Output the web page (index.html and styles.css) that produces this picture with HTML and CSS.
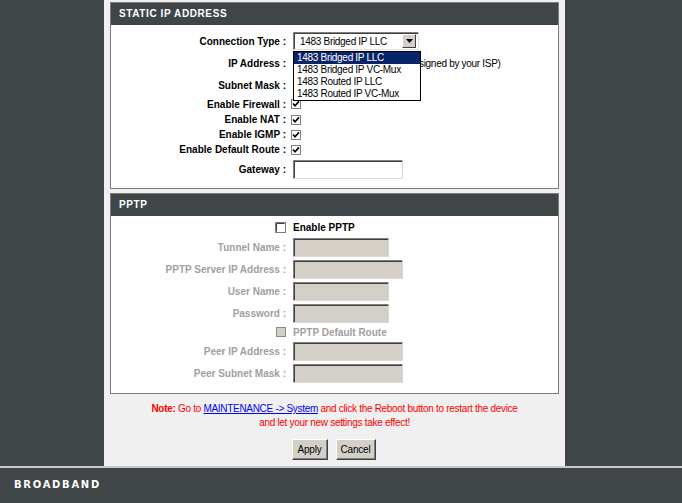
FILE: index.html
```html
<!DOCTYPE html>
<html>
<head>
<meta charset="utf-8">
<title>Static IP Address</title>
<link rel="stylesheet" href="styles.css">
</head>
<body>
<div class="page">
  <div class="gutter-l"></div>
  <div class="center">
    <div class="box box-static">
      <div class="box-h">STATIC IP ADDRESS</div>
      <div class="box-b">
        <div class="row r-sel">
          <span class="lbl">Connection Type :</span>
          <div class="val">
            <div class="selwrap">
              <div class="select"><span class="sel-text">1483 Bridged IP LLC</span><span class="sel-btn"><svg width="7" height="4" viewBox="0 0 7 4"><path d="M0 0H7L3.5 4Z" fill="#000"/></svg></span></div>
              <ul class="dropdown">
                <li class="on">1483 Bridged IP LLC</li>
                <li>1483 Bridged IP VC-Mux</li>
                <li>1483 Routed IP LLC</li>
                <li>1483 Routed IP VC-Mux</li>
              </ul>
            </div>
          </div>
        </div>
        <div class="row">
          <span class="lbl">IP Address :</span>
          <div class="val"><span class="inp w110"></span><span class="hint">(assigned by your ISP)</span></div>
        </div>
        <div class="row">
          <span class="lbl">Subnet Mask :</span>
          <div class="val"><span class="inp w110"></span></div>
        </div>
        <div class="row r-cb r-first">
          <span class="lbl">Enable Firewall :</span>
          <div class="val"><svg class="cb" width="10" height="10" viewBox="0 0 10 10"><rect x="0.5" y="0.5" width="9" height="9" fill="#fff" stroke="#808080"/><path d="M2 4.5L4 6.8L8 2.4" stroke="#000" stroke-width="1.6" fill="none"/></svg></div>
        </div>
        <div class="row r-cb">
          <span class="lbl">Enable NAT :</span>
          <div class="val"><svg class="cb" width="10" height="10" viewBox="0 0 10 10"><rect x="0.5" y="0.5" width="9" height="9" fill="#fff" stroke="#808080"/><path d="M2 4.5L4 6.8L8 2.4" stroke="#000" stroke-width="1.6" fill="none"/></svg></div>
        </div>
        <div class="row r-cb">
          <span class="lbl">Enable IGMP :</span>
          <div class="val"><svg class="cb" width="10" height="10" viewBox="0 0 10 10"><rect x="0.5" y="0.5" width="9" height="9" fill="#fff" stroke="#808080"/><path d="M2 4.5L4 6.8L8 2.4" stroke="#000" stroke-width="1.6" fill="none"/></svg></div>
        </div>
        <div class="row r-cb">
          <span class="lbl">Enable Default Route :</span>
          <div class="val"><svg class="cb" width="10" height="10" viewBox="0 0 10 10"><rect x="0.5" y="0.5" width="9" height="9" fill="#fff" stroke="#808080"/><path d="M2 4.5L4 6.8L8 2.4" stroke="#000" stroke-width="1.6" fill="none"/></svg></div>
        </div>
        <div class="row r-gw">
          <span class="lbl">Gateway :</span>
          <div class="val"><span class="inp w110"></span></div>
        </div>
      </div>
    </div>

    <div class="box box-pptp">
      <div class="box-h">PPTP</div>
      <div class="box-b">
        <div class="row r-en">
          <span class="lbl"><svg class="cb-plain" width="11" height="11" viewBox="0 0 11 11"><rect x="0.5" y="0.5" width="10" height="10" fill="#fff" stroke="#7a7a7a"/><path d="M1.5 9.5V1.5H9.5" stroke="#404040" fill="none"/></svg></span>
          <div class="val"><span class="strong">Enable PPTP</span></div>
        </div>
        <div class="row dis">
          <span class="lbl">Tunnel Name :</span>
          <div class="val"><span class="inp w96 off"></span></div>
        </div>
        <div class="row dis">
          <span class="lbl">PPTP Server IP Address :</span>
          <div class="val"><span class="inp w110 off"></span></div>
        </div>
        <div class="row dis">
          <span class="lbl">User Name :</span>
          <div class="val"><span class="inp w96 off"></span></div>
        </div>
        <div class="row dis">
          <span class="lbl">Password :</span>
          <div class="val"><span class="inp w96 off"></span></div>
        </div>
        <div class="row dis r-dr">
          <span class="lbl"><svg class="cb-plain" width="10" height="10" viewBox="0 0 10 10"><rect x="0.5" y="0.5" width="9" height="9" fill="#d4d0c8" stroke="#8a8a8a"/></svg></span>
          <div class="val"><span class="strong">PPTP Default Route</span></div>
        </div>
        <div class="row dis">
          <span class="lbl">Peer IP Address :</span>
          <div class="val"><span class="inp w110 off"></span></div>
        </div>
        <div class="row dis">
          <span class="lbl">Peer Subnet Mask :</span>
          <div class="val"><span class="inp w110 off"></span></div>
        </div>
      </div>
    </div>

    <div class="note">
      <p><b>Note:</b> Go to <a href="#">MAINTENANCE -&gt; System</a> and click the Reboot button to restart the device<br>and let your new settings take effect!</p>
    </div>
    <div class="buttons">
      <button class="btn b-apply">Apply</button>
      <button class="btn b-cancel">Cancel</button>
    </div>
  </div>
  <div class="gutter-r"></div>
</div>
<div class="footer">BROADBAND</div>
</body>
</html>
```

FILE: styles.css
```css
html, body {
  margin: 0;
  padding: 0;
}
body {
  background: #404647;
  font-family: "Liberation Sans", Arial, sans-serif;
  font-size: 10px;
  color: #000;
}
.page {
  display: flex;
  height: 466px;
}
.gutter-l {
  width: 104px;
  flex: none;
}
.gutter-r {
  flex: 1;
}
.center {
  width: 461px;
  flex: none;
  background: #f0f0f0;
  padding: 2px 6px 0;
  box-sizing: border-box;
}
.box {
  background: #fff;
  border: 1px solid #7c7c7c;
}
.box + .box {
  margin-top: 4px;
}
.box-h {
  background: #404647;
  color: #fff;
  font-weight: bold;
  height: 22px;
  line-height: 22px;
  padding-left: 8px;
  letter-spacing: 0.6px;
}
.box-static .box-b {
  padding: 5px 0 6px;
}
.box-pptp .box-b {
  padding: 2px 0 9px;
}
.row {
  display: grid;
  grid-template-columns: 175px 1fr;
  column-gap: 7px;
  align-items: center;
  height: 22px;
}
.lbl {
  text-align: right;
  font-weight: bold;
  white-space: nowrap;
  display: flex;
  justify-content: flex-end;
  align-items: center;
}
.val {
  display: flex;
  align-items: center;
  white-space: nowrap;
}
.r-cb {
  height: 15px;
}
.r-first {
  height: 16px;
}
.r-gw {
  height: 25px;
}
.r-en {
  height: 18px;
}
.r-dr {
  height: 16px;
}
.cb {
  margin-left: -2px;
  display: block;
}
.cb-plain {
  display: block;
}
.strong {
  font-weight: bold;
}
.dis .lbl,
.dis .strong {
  color: #a0a0a0;
}
.inp {
  display: block;
  height: 19px;
  box-sizing: border-box;
  background: #fff;
  border: 1px solid;
  border-color: #808080 #d8d8d8 #d8d8d8 #808080;
  box-shadow: inset 1px 1px 0 #404040;
}
.inp.off {
  background: #d4d0c8;
}
.w110 {
  width: 110px;
}
.w96 {
  width: 96px;
}
.hint {
  margin-left: 3px;
  letter-spacing: -0.3px;
}
.selwrap {
  position: relative;
}
.select {
  width: 126px;
  height: 18px;
  box-sizing: border-box;
  border: 1px solid;
  border-color: #808080 #e0e0e0 #e0e0e0 #808080;
  box-shadow: inset 1px 1px 0 #404040;
  background: #fff;
  display: flex;
  align-items: center;
  justify-content: space-between;
  padding: 0 2px 0 6px;
}
.sel-text {
  letter-spacing: -0.3px;
}
.sel-btn {
  width: 14px;
  height: 14px;
  box-sizing: border-box;
  background: #d4d0c8;
  border: 1px solid;
  border-color: #fff #404040 #404040 #fff;
  display: flex;
  align-items: center;
  justify-content: center;
}
.dropdown {
  position: absolute;
  left: 0;
  top: 19px;
  width: 128px;
  margin: 0;
  padding: 0;
  list-style: none;
  background: #fff;
  border: 1px solid #000;
  box-sizing: border-box;
  letter-spacing: -0.3px;
}
.dropdown li {
  height: 12px;
  line-height: 12px;
  padding-left: 3px;
}
.dropdown li.on {
  background: #0a246a;
  color: #fff;
}
.note {
  text-align: center;
  color: #ff0000;
  padding-top: 8px;
  letter-spacing: -0.3px;
}
.note p {
  margin: 0;
  line-height: 14px;
}
.note a {
  color: #0000ff;
  text-decoration: underline;
}
.buttons {
  display: flex;
  justify-content: center;
  gap: 8px;
  margin-top: 9px;
  padding-right: 2px;
}
.btn {
  height: 21px;
  font-family: "Liberation Sans", Arial, sans-serif;
  font-size: 10px;
  letter-spacing: -0.2px;
  color: #000;
  background: #d4d0c8;
  border: 1px solid;
  border-color: #fff #404040 #404040 #fff;
  box-shadow: inset -1px -1px 0 #808080;
  padding: 0;
}
.b-apply {
  width: 36px;
}
.b-cancel {
  width: 40px;
}
.footer {
  border-top: 2px solid #c8caca;
  height: 37px;
  box-sizing: border-box;
  padding-left: 14px;
  display: flex;
  align-items: center;
  color: #fff;
  font-family: "DejaVu Sans", sans-serif;
  font-weight: bold;
  font-size: 10px;
  letter-spacing: 1.7px;
  padding-bottom: 2px;
}
```
